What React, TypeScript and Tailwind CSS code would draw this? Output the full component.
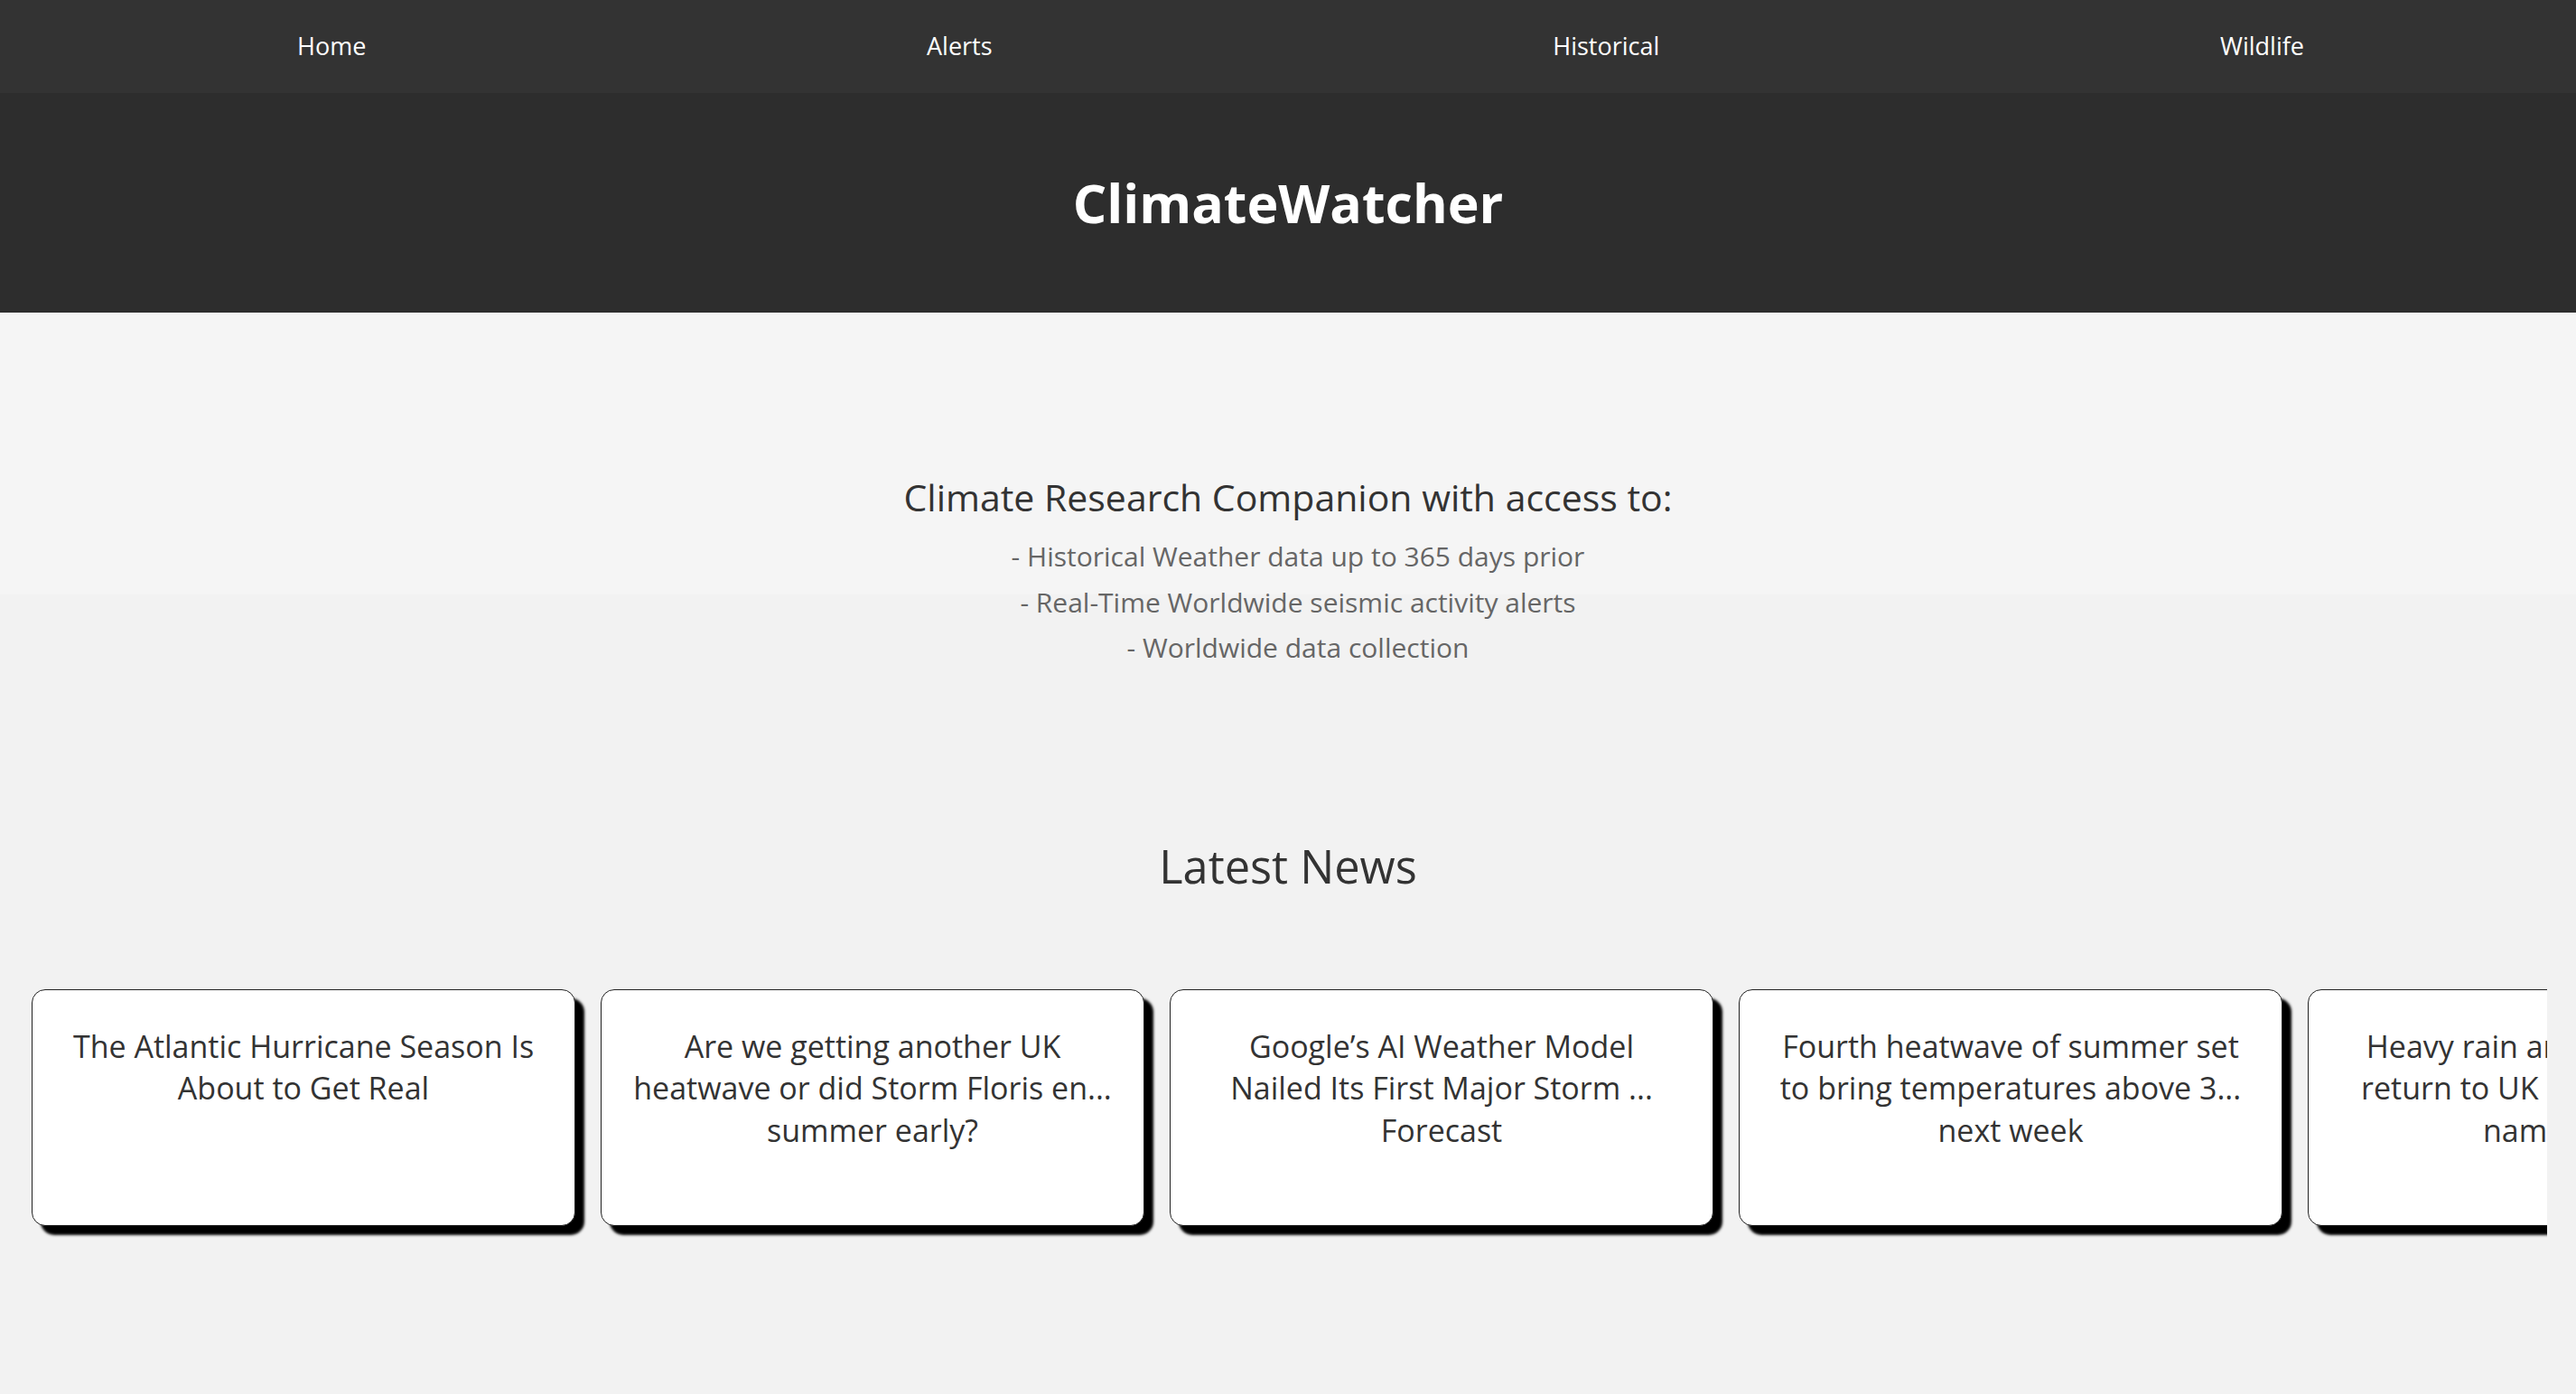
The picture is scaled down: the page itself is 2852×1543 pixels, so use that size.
const navItems = ["Home", "Alerts", "Historical", "Wildlife"];

const features = [
  "- Historical Weather data up to 365 days prior",
  "- Real-Time Worldwide seismic activity alerts",
  "- Worldwide data collection",
];

const news: string[][] = [
  ["The Atlantic Hurricane Season Is", "About to Get Real"],
  ["Are we getting another UK", "heatwave or did Storm Floris en...", "summer early?"],
  ["Google\u2019s AI Weather Model", "Nailed Its First Major Storm ...", "Forecast"],
  ["Fourth heatwave of summer set", "to bring temperatures above 3...", "next week"],
  ["Heavy rain and thunder set to", "return to UK as first storm is ...", "named storm"],
];

const NewsCard = ({ lines }: { lines: string[] }) => {
  return (
    <div className="shrink-0 w-[602px] h-[262px] bg-white border border-[#222] rounded-[15px] shadow-[10px_10px_3px_#000] pt-[39px] px-4 text-center text-[#333] text-[34px] leading-[46.5px]">
      {lines.map((line) => (
        <div key={line} className="whitespace-nowrap">
          {line}
        </div>
      ))}
    </div>
  );
};

export default function App() {
  return (
    <div className="min-h-screen bg-[linear-gradient(to_bottom,#f5f5f5_0px,#f5f5f5_658px,#f2f2f2_658px)] font-['Segoe_UI','Open_Sans',sans-serif]">
      {/* top nav */}
      <nav className="h-[103px] bg-[#333] flex items-center justify-between pl-[329px] pr-[301px] pb-[1px]">
        {navItems.map((item) => (
          <a key={item} className="text-white text-[27px] cursor-pointer">
            {item}
          </a>
        ))}
      </nav>

      <header className="h-[243px] bg-[#2d2d2d] flex items-center justify-center">
        <h1 className="text-white font-bold text-[59px] leading-none">ClimateWatcher</h1>
      </header>

      <section className="pt-[180px] text-center">
        <h2 className="text-[#333] text-[41px] leading-[49px]">Climate Research Companion with access to:</h2>
        <ul className="mt-[16px] pl-[22px] text-[#666] text-[30px] leading-[50.5px]">
          {features.map((f) => (
            <li key={f}>{f}</li>
          ))}
        </ul>
      </section>

      <section className="pt-[183px]">
        <h2 className="text-center text-[#333] text-[50.5px] leading-[65px]">Latest News</h2>
        <div className="mt-[104px] mx-[32px] overflow-hidden">
          <div className="flex gap-[28px] pl-[3px] pb-[20px]">
            {news.map((lines, i) => (
              <NewsCard key={i} lines={lines} />
            ))}
          </div>
        </div>
      </section>
    </div>
  );
}
